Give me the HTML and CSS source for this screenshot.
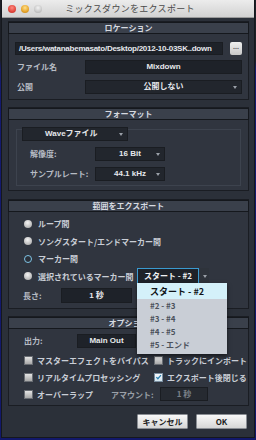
FILE: index.html
```html
<!DOCTYPE html>
<html lang="ja">
<head>
<meta charset="utf-8">
<link rel="stylesheet" href="styles.css">
</head>
<body>
<div class="window">
  <div class="titlebar">
    <div class="lights">
      <span class="light red"></span>
      <span class="light yellow"></span>
      <span class="light gray"></span>
    </div>
    <div class="title">ミックスダウンをエクスポート</div>
  </div>
  <div class="content">
    <section class="panel p-loc">
      <div class="phead">ロケーション</div>
      <div class="pbody">
        <div class="row path-row">
          <div class="field path">/Users/watanabemasato/Desktop/2012-10-03SK..down</div>
          <div class="dots">...</div>
        </div>
        <div class="row">
          <div class="label lw1">ファイル名</div>
          <div class="field wide">Mixdown</div>
        </div>
        <div class="row">
          <div class="label lw1">公開</div>
          <div class="field wide drop">公開しない<span class="arrow"></span></div>
        </div>
      </div>
    </section>

    <section class="panel p-fmt">
      <div class="phead">フォーマット</div>
      <div class="group">
        <div class="field drop wave">Waveファイル<span class="arrow"></span></div>
        <div class="row g-row">
          <div class="label lw2">解像度:</div>
          <div class="field drop small">16 Bit<span class="arrow"></span></div>
        </div>
        <div class="row g-row">
          <div class="label lw2">サンプルレート:</div>
          <div class="field drop small">44.1 kHz<span class="arrow"></span></div>
        </div>
      </div>
    </section>

    <section class="panel p-range">
      <div class="phead">範囲をエクスポート</div>
      <div class="pbody range-body">
        <div class="radio-row"><span class="radio"></span>ループ間</div>
        <div class="radio-row"><span class="radio"></span>ソングスタート/エンドマーカー間</div>
        <div class="radio-row"><span class="radio on"></span>マーカー間</div>
        <div class="radio-row sel-row">
          <span class="radio"></span><span class="sel-label">選択されているマーカー間</span>
          <div class="combo">
            <div class="combo-box">スタート - #2</div>
            <div class="combo-btn"><span class="arrow"></span></div>
            <ul class="menu">
              <li class="hi">スタート - #2</li>
              <li>#2 - #3</li>
              <li>#3 - #4</li>
              <li>#4 - #5</li>
              <li>#5 - エンド</li>
            </ul>
          </div>
        </div>
        <div class="row len-row">
          <div class="label lw3">長さ:</div>
          <div class="field len">1 秒</div>
        </div>
      </div>
    </section>

    <section class="panel p-opt">
      <div class="phead">オプション</div>
      <div class="pbody opt-body">
        <div class="row out-row">
          <div class="label lw4">出力:</div>
          <div class="field out">Main Out</div>
        </div>
        <div class="checks">
          <div class="chk"><span class="box"></span>マスターエフェクトをバイパス</div>
          <div class="chk"><span class="box"></span>トラックにインポート</div>
          <div class="chk"><span class="box"></span>リアルタイムプロセッシング</div>
          <div class="chk"><span class="box on"><svg viewBox="0 0 8 8" width="8" height="8"><path d="M1.5 4.2 L3.3 6 L6.8 1.8" fill="none" stroke="#2a7fb0" stroke-width="1.4"/></svg></span>エクスポート後閉じる</div>
          <div class="chk"><span class="box"></span>オーバーラップ</div>
          <div class="chk amount"><span class="amt-label">アマウント:</span><div class="field amt">1 秒</div></div>
        </div>
      </div>
    </section>

    <div class="buttons">
      <div class="btn">キャンセル</div>
      <div class="btn">OK</div>
    </div>
  </div>
</div>
</body>
</html>
```

FILE: styles.css
```css
* { box-sizing: border-box; }
html, body { margin: 0; padding: 0; }
body {
  width: 256px;
  height: 440px;
  background: linear-gradient(#1c1f26 0, #1c1f26 60px, #141a6e 70px, #12186a 100%);
  font-family: "Liberation Sans", "Noto Sans CJK JP", sans-serif;
  font-weight: bold;
  font-size: 8px;
  color: #c9ced6;
  overflow: hidden;
}
.window {
  margin-left: 2px;
  width: 252px;
  height: 437px;
  background: #2b3039;
  display: flex;
  flex-direction: column;
  box-shadow: 0 0 0 1px #15181d;
}
.titlebar {
  height: 18px;
  background: linear-gradient(#ececec, #d2d2d2);
  border-bottom: 1px solid #9a9a9a;
  display: flex;
  align-items: center;
  flex: none;
}
.lights { display: flex; gap: 5px; padding-left: 6px; }
.light { width: 8px; height: 8px; border-radius: 50%; display: block; }
.light.red { background: radial-gradient(circle at 50% 35%, #ff8a80, #e0443a 60%, #b8312a); }
.light.yellow { background: radial-gradient(circle at 50% 35%, #ffe08a, #e6a42a 60%, #b57a18); }
.light.gray { background: radial-gradient(circle at 50% 35%, #f2f2f2, #c8c8c8 60%, #a8a8a8); }
.title {
  flex: 1;
  text-align: center;
  font-family: "Noto Sans CJK JP", sans-serif;
  font-weight: normal;
  font-size: 9px;
  color: #4a4a4a;
  margin-right: 36px;
  letter-spacing: 0.3px;
}
.content {
  flex: 1;
  padding: 3px 4px 0 6px;
  display: flex;
  flex-direction: column;
}
.panel {
  background: #30353f;
  border: 1px solid #1a1d23;
  width: 241px;
  flex: none;
}
.phead {
  height: 12px;
  background: #3a404b;
  border: 1px solid #15181d;
  margin: 0 -1px;
  text-align: center;
  font-family: "Noto Sans CJK JP", sans-serif;
  font-size: 8px;
  line-height: 10px;
  color: #d6dae0;
}
.pbody { padding: 0 6px; }
.row { display: flex; align-items: center; }
.field {
  background: #1e2229;
  border: 1px solid #1a1d22;
  color: #e6e8ec;
  height: 14px;
  line-height: 12px;
  text-align: center;
  position: relative;
  white-space: nowrap;
  flex: none;
}
.label { color: #b7bcc4; font-family: "Noto Sans CJK JP", sans-serif; line-height: 12px; flex: none; }
.lw1 { width: 70px; padding-left: 2px; }
.path-row { margin-top: 8px; gap: 7px; }
.field.path {
  width: 208px; height: 13px;
  text-align: left; padding-left: 3px;
  letter-spacing: -0.25px;
  overflow: hidden;
}
.dots {
  width: 13px; height: 13px;
  background: linear-gradient(#f0f0f0, #c8c8c8);
  border-radius: 2px;
  color: #555;
  font-size: 7px;
  line-height: 10px;
  text-align: center;
}
.p-loc .row:nth-child(2) { margin-top: 5px; }
.p-loc .row:nth-child(3) { margin-top: 6px; }
.field.wide { width: 157px; }
.p-loc .pbody { padding-bottom: 5px; }
.drop { background: #22262d; }
.arrow {
  position: absolute;
  right: 4px; top: 5px;
  width: 0; height: 0;
  border-left: 2.5px solid transparent;
  border-right: 2.5px solid transparent;
  border-top: 3px solid #9aa0a8;
}
.p-fmt { margin-top: 7px; }
.group {
  margin: 9px 7px 4px 7px;
  border: 1px solid #3d434e;
  height: 57px;
  padding: 0 0 0 13px;
}
.field.wave {
  width: 106px;
  margin: -3px 0 0 -8px;
  text-align: left;
  padding-left: 22px;
}
.lw2 { width: 65px; }
.g-row { margin-top: 6px; }
.field.small { width: 70px; }
.p-range { margin-top: 8px; }
.range-body { padding: 3px 0 5px 15px; }
.radio-row {
  display: flex; align-items: center;
  height: 17.5px;
  font-family: "Noto Sans CJK JP", sans-serif;
  color: #c9ced6;
}
.radio {
  width: 8px; height: 8px; border-radius: 50%;
  background: radial-gradient(circle at 45% 35%, #f4f4f4, #b8b8b8 70%, #8c8c8c);
  margin-right: 6px;
  flex: none;
}
.radio.on {
  background: #2b3039;
  border: 1.5px solid #7fc4e6;
}
.sel-label { width: 99px; flex: none; }
.combo { display: flex; position: relative; height: 16px; }
.combo-box {
  width: 62px; height: 16px;
  border: 1px solid #3a9ad0;
  background: #1e2229;
  color: #f0f2f4;
  text-align: center;
  line-height: 14px;
}
.combo-btn {
  width: 9px; height: 16px;
  background: #2e333b;
  position: relative;
  margin-left: 1px;
}
.combo-btn .arrow { right: 2px; top: 7px; }
.menu {
  position: absolute;
  left: 0; top: 15px;
  width: 90px;
  margin: 0; padding: 0 0 3px 0;
  list-style: none;
  background: #c9ced6;
  box-shadow: 0 2px 4px rgba(0,0,0,0.55);
  z-index: 5;
}
.menu li {
  height: 13px;
  line-height: 13px;
  padding-left: 13px;
  color: #4c525c;
  font-family: "Noto Sans CJK JP", sans-serif;
}
.menu li.hi {
  height: 16px;
  line-height: 18px;
  background: #d4f1fa;
  color: #101418;
  font-size: 9px;
}
.len-row { margin: 3px 0 0 -1px; }
.lw3 { width: 38px; }
.field.len { width: 71px; height: 15px; line-height: 13px; }
.p-opt { margin-top: 7px; }
.opt-body { padding: 5px 0 5px 13px; }
.lw4 { width: 55px; padding-left: 2px; }
.field.out { width: 59px; }
.checks {
  display: grid;
  grid-template-columns: 130px 100px;
  row-gap: 5px;
  margin-top: 6px;
  padding-left: 2px;
}
.chk {
  display: flex; align-items: center;
  height: 12px;
  font-family: "Noto Sans CJK JP", sans-serif;
  color: #c9ced6;
  white-space: nowrap;
}
.box {
  width: 9px; height: 9px;
  background: linear-gradient(#e4e4e4, #a8a8a8);
  border: 1px solid #6a6e74;
  margin-right: 4px;
  flex: none;
  display: flex; align-items: center; justify-content: center;
}
.box.on { background: linear-gradient(#f6f8fa, #d4e6f0); border-color: #7a8ea0; }
.box svg { display: block; }
.amount { margin-left: -43px; }
.amt-label { width: 49px; color: #9aa0a8; }
.field.amt { width: 48px; color: #7a8088; background: #262a31; }
.buttons {
  display: flex;
  justify-content: flex-end;
  gap: 8px;
  margin-top: 8px;
  padding-right: 3px;
}
.btn {
  width: 51px; height: 15px;
  background: linear-gradient(#f8f8f8, #d6d6d6);
  border: 1px solid #8a8e94;
  border-radius: 1px;
  color: #222;
  text-align: center;
  line-height: 13px;
  font-family: "Noto Sans CJK JP", sans-serif;
}
```
